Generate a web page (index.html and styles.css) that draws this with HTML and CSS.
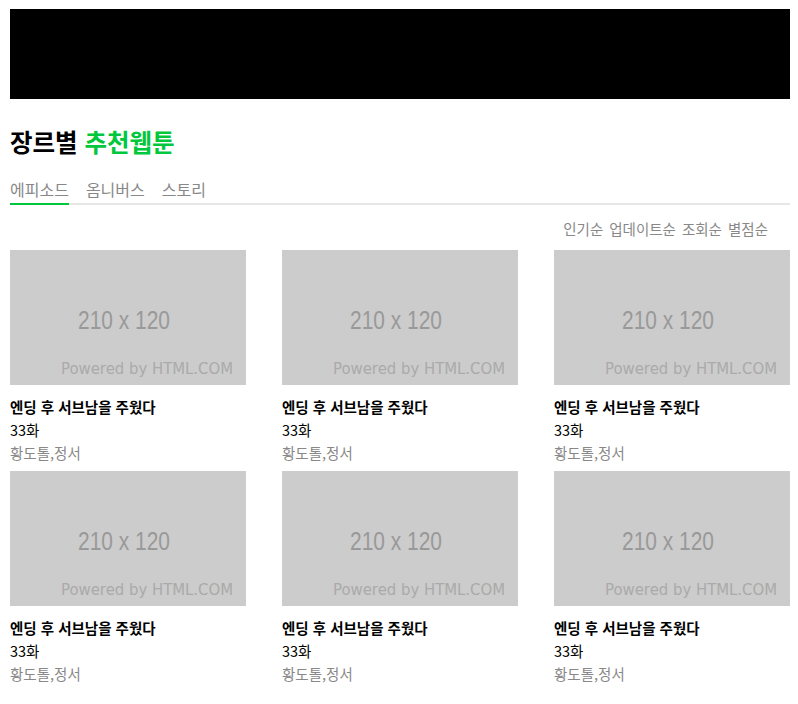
FILE: index.html
```html
<!DOCTYPE html>
<html lang="ko">
<head>
    <meta charset="UTF-8">
    <meta name="viewport" content="width=device-width, initial-scale=1.0">
    <title>장르별 추천웹툰</title>
    <link rel="stylesheet" href="styles.css">
</head>
<body>
    <div class="banner"></div>

    <h2 class="section-title">장르별 <span class="accent">추천웹툰</span></h2>

    <ul class="tabs">
        <li class="tab active">에피소드</li>
        <li class="tab">옴니버스</li>
        <li class="tab">스토리</li>
    </ul>

    <div class="sort">
        <span>인기순</span>
        <span>업데이트순</span>
        <span>조회순</span>
        <span>별점순</span>
    </div>

    <ul class="toon-list" id="toon-list"></ul>

    <script>
        // placeholder data, same card six times
        const toons = [];
        for (let i = 0; i < 6; i++) {
            toons.push({ title: '엔딩 후 서브남을 주웠다', episode: '33화', author: '황도톨,정서' });
        }

        const list = document.getElementById('toon-list');
        toons.forEach(function(toon) {
            const item = document.createElement('li');
            item.className = 'toon';
            item.innerHTML = `
                <svg class="thumb" viewBox="0 0 236 135" width="236" height="135">
                    <rect width="236" height="135" fill="#cccccc"/>
                    <text class="thumb-size" x="68" y="79" textLength="92" lengthAdjust="spacingAndGlyphs">210 x 120</text>
                    <text class="thumb-credit" x="51" y="124" textLength="172" lengthAdjust="spacingAndGlyphs">Powered by HTML.COM</text>
                </svg>
                <div class="toon-info">
                    <strong class="toon-title">${toon.title}</strong>
                    <span class="toon-episode">${toon.episode}</span>
                    <span class="toon-author">${toon.author}</span>
                </div>
            `;
            list.appendChild(item);
        });
    </script>
</body>
</html>
```

FILE: styles.css
```css
body {
    margin: 9px 8px 0 10px;
    font-family: "Noto Sans CJK KR", "Noto Sans", sans-serif;
    color: #000;
    background: #fff;
}

.banner {
    height: 90px;
    background: #000;
}

.section-title {
    margin: 28px 0 0;
    font-size: 24.5px;
    line-height: 30px;
    font-weight: bold;
}

.accent {
    color: #00c73c;
}

.tabs {
    list-style: none;
    margin: 22px 0 0;
    padding: 0;
    display: flex;
    gap: 17px;
    border-bottom: 2px solid #e6e6e6;
}

.tab {
    font-size: 16px;
    line-height: 20px;
    color: #888;
    padding-bottom: 4px;
    margin-bottom: -2px;
    border-bottom: 2px solid transparent;
}

.tab.active {
    border-bottom-color: #00c73c;
}

.sort {
    margin: 14px 0 11px;
    padding-right: 22px;
    display: flex;
    justify-content: flex-end;
    gap: 6px;
    font-size: 14.5px;
    line-height: 20px;
    color: #888;
}

.toon-list {
    list-style: none;
    margin: 0;
    padding: 0;
    display: grid;
    grid-template-columns: repeat(3, 236px);
    column-gap: 36px;
}

.toon {
    margin-bottom: 7px;
}

.thumb {
    display: block;
}

.thumb-size {
    font-family: "Liberation Sans", Arial, sans-serif;
    font-size: 25px;
    fill: #999;
}

.thumb-credit {
    font-family: "DejaVu Sans", sans-serif;
    font-size: 15px;
    fill: #aaa;
}

.toon-info {
    padding-top: 10px;
    display: flex;
    flex-direction: column;
    font-size: 14.5px;
    line-height: 23px;
}

.toon-title {
    font-weight: bold;
}

.toon-author {
    color: #888;
}
```
